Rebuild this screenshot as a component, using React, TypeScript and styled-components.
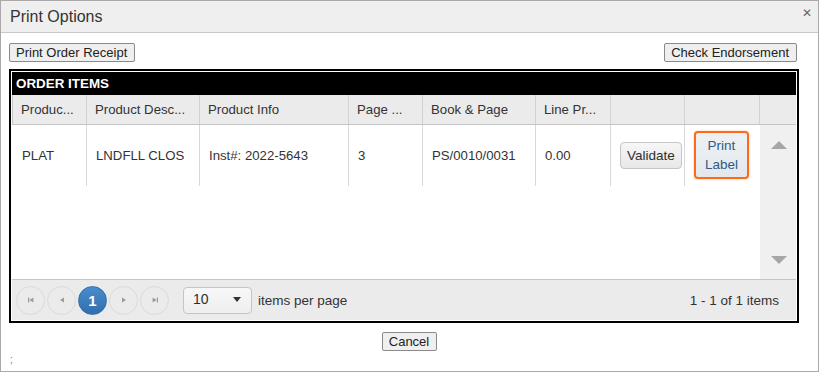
import styled, { createGlobalStyle } from 'styled-components';

const GlobalStyle = createGlobalStyle`
  body {
    margin: 0;
    font-family: 'Liberation Sans', Arial, sans-serif;
    background: #fff;
  }
`;

const columns = [
  { title: 'Produc...', width: 74 },
  { title: 'Product Desc...', width: 113 },
  { title: 'Product Info', width: 149 },
  { title: 'Page ...', width: 74 },
  { title: 'Book & Page', width: 113 },
  { title: 'Line Pr...', width: 75 },
  { title: '', width: 74 },
  { title: '', width: 75 },
];

const gridCols = columns.map((c) => `${c.width}px`).join(' ');

const SDialog = styled.div`
  width: 819px;
  height: 372px;
  box-sizing: border-box;
  border: 1px solid #a9a9a9;
  display: flex;
  flex-direction: column;
`;

const STitleBar = styled.div`
  height: 32px;
  background: #efefef;
  border-bottom: 1px solid #c8c8c8;
  display: flex;
  align-items: center;
  justify-content: space-between;
  padding: 1px 9px 0 9px;
  box-sizing: border-box;
  color: #333;
  font-size: 16px;
`;

const SClose = styled.span`
  font-size: 12px;
  color: #666;
  margin-top: -8px;
  margin-right: -3px;
`;

const SContent = styled.div`
  padding: 10px 0 0 8px;
  width: 790px;
`;

const SActions = styled.div`
  display: flex;
  justify-content: space-between;
  padding-right: 2px;
`;

const SPlainButton = styled.button`
  font-family: 'Liberation Sans', Arial, sans-serif;
  font-size: 13px;
  line-height: 15px;
  color: #222;
  background: #efefef;
  border: 1px solid #8a8a8a;
  border-radius: 2px;
  padding: 1px 7px 1px 6px;
  margin: 0;
`;

const SGrid = styled.div`
  margin-top: 7px;
  border: 2px solid #000;
  padding: 1px;
  width: 790px;
  box-sizing: border-box;
`;

const SToolbar = styled.div`
  height: 23px;
  line-height: 23px;
  background: #000;
  color: #fff;
  font-weight: bold;
  font-size: 13.4px;
  padding-left: 4px;
`;

const SHeaderRow = styled.div`
  display: grid;
  grid-template-columns: ${gridCols} 1fr;
  height: 30px;
  background: #ebebeb;
  border-bottom: 1px solid #c5c5c5;
  box-sizing: border-box;
`;

const SHeaderCell = styled.div<{ $first?: boolean }>`
  border-left: ${(p) => (p.$first ? '1px solid #c5c5c5' : '1px solid #d3d3d3')};
  padding-left: 8px;
  font-size: 13.2px;
  color: #333;
  line-height: 29px;
  white-space: nowrap;
  overflow: hidden;
`;

const SBody = styled.div`
  display: grid;
  grid-template-columns: 1fr 36px;
  height: 154px;
`;

const SRow = styled.div`
  display: grid;
  grid-template-columns: ${gridCols};
  height: 61px;
`;

const SCell = styled.div<{ $first?: boolean }>`
  border-left: 1px solid ${(p) => (p.$first ? 'transparent' : '#d8d8d8')};
  padding-left: 9px;
  display: flex;
  align-items: center;
  font-size: 13.2px;
  color: #333;
  white-space: nowrap;
`;

const SButtonCell = styled.div<{ $offset: number }>`
  border-left: 1px solid #d8d8d8;
  display: flex;
  align-items: flex-start;
  padding-left: ${(p) => p.$offset}px;
`;

const SScrollbar = styled.div`
  background: #f0f0f0;
  display: flex;
  flex-direction: column;
  justify-content: space-between;
  align-items: center;
  padding: 16px 0 15px 1px;
`;

const SArrow = styled.div<{ $down?: boolean }>`
  width: 0;
  height: 0;
  border-left: 8px solid transparent;
  border-right: 8px solid transparent;
  ${(p) => (p.$down ? 'border-top: 8px solid #a6a6a6;' : 'border-bottom: 8px solid #a6a6a6;')}
`;

const SKButton = styled.button`
  font-family: 'Liberation Sans', Arial, sans-serif;
  font-size: 13.5px;
  color: #2e2e2e;
  background: linear-gradient(#f6f6f6, #e8e8e8);
  border: 1px solid #c5c5c5;
  border-radius: 4px;
  width: 62px;
  height: 27px;
  padding: 0;
  margin: 17px 0 0 0;
`;

const SLabelButton = styled.button`
  font-family: 'Liberation Sans', Arial, sans-serif;
  font-size: 13.5px;
  line-height: 19px;
  color: #2d5b8a;
  background: linear-gradient(#eef1f4, #e4e8ec);
  border: 2px solid #ff6a1a;
  border-radius: 4px;
  width: 55px;
  height: 48px;
  padding: 0;
  margin: 6px 0 0 0;
  box-shadow: 0 0 2px rgba(255, 106, 26, 0.5);
`;

const SFooter = styled.div`
  height: 41px;
  border-top: 1px solid #c5c5c5;
  background: #ebebeb;
  box-sizing: border-box;
  display: flex;
  align-items: center;
  padding: 0 17px 0 4px;
  font-size: 13.5px;
  color: #333;
`;

const SPager = styled.div`
  display: flex;
  gap: 2px;
`;

const SPageButton = styled.div<{ $active?: boolean }>`
  width: 29px;
  height: 29px;
  box-sizing: border-box;
  border-radius: 50%;
  border: 1px solid ${(p) => (p.$active ? '#2f6fad' : '#dadada')};
  background: ${(p) => (p.$active ? 'linear-gradient(#4a8ccb, #2f6fad)' : 'transparent')};
  color: #fff;
  font-weight: bold;
  font-size: 15px;
  display: flex;
  align-items: center;
  justify-content: center;
`;

const SSelect = styled.div`
  margin-left: 14px;
  width: 69px;
  height: 27px;
  box-sizing: border-box;
  border: 1px solid #c5c5c5;
  border-radius: 4px;
  background: linear-gradient(#f7f7f7, #eeeeee);
  display: flex;
  align-items: center;
  justify-content: space-between;
  padding: 0 10px 2px 9px;
  font-size: 14px;
  color: #2e2e2e;
`;

const SPerPage = styled.span`
  margin-left: 6px;
`;

const SInfo = styled.span`
  margin-left: auto;
`;

const SFooterActions = styled.div`
  display: flex;
  justify-content: center;
  margin-top: 9px;
`;

const SNote = styled.div`
  padding-left: 9px;
  font-size: 10px;
  color: #777;
  line-height: 12px;
  margin-top: 3px;
`;

const PagerIcon = ({ kind }: { kind: 'first' | 'prev' | 'next' | 'last' }) => {
  const flip = kind === 'next' || kind === 'last';
  const bar = kind === 'first' || kind === 'last';
  return (
    <svg width='8' height='8' viewBox='0 0 8 8' style={{ transform: flip ? 'scaleX(-1)' : undefined }}>
      {bar && <rect x='1' y='1.5' width='1.2' height='5' fill='#9a9a9a' />}
      <polygon points={bar ? '2.4,4 6.4,1.5 6.4,6.5' : '2,4 6,1.5 6,6.5'} fill='#9a9a9a' />
    </svg>
  );
};

const App = () => {
  const row = ['PLAT', 'LNDFLL CLOS', 'Inst#: 2022-5643', '3', 'PS/0010/0031', '0.00'];

  return (
    <>
      <GlobalStyle />
      <SDialog>
        <STitleBar>
          <span>Print Options</span>
          <SClose>✕</SClose>
        </STitleBar>
        <SContent>
          <SActions>
            <SPlainButton>Print Order Receipt</SPlainButton>
            <SPlainButton>Check Endorsement</SPlainButton>
          </SActions>

          <SGrid>
            <SToolbar>ORDER ITEMS</SToolbar>
            <SHeaderRow>
              {columns.map((c, i) => (
                <SHeaderCell key={i} $first={i === 0}>
                  {c.title}
                </SHeaderCell>
              ))}
              <SHeaderCell />
            </SHeaderRow>
            <SBody>
              <div>
                <SRow>
                  {row.map((v, i) => (
                    <SCell key={i} $first={i === 0}>
                      {v}
                    </SCell>
                  ))}
                  <SButtonCell $offset={9}>
                    <SKButton>Validate</SKButton>
                  </SButtonCell>
                  <SButtonCell $offset={9}>
                    <SLabelButton>
                      Print
                      <br />
                      Label
                    </SLabelButton>
                  </SButtonCell>
                </SRow>
              </div>
              <SScrollbar>
                <SArrow />
                <SArrow $down />
              </SScrollbar>
            </SBody>
            <SFooter>
              <SPager>
                <SPageButton>
                  <PagerIcon kind='first' />
                </SPageButton>
                <SPageButton>
                  <PagerIcon kind='prev' />
                </SPageButton>
                <SPageButton $active>1</SPageButton>
                <SPageButton>
                  <PagerIcon kind='next' />
                </SPageButton>
                <SPageButton>
                  <PagerIcon kind='last' />
                </SPageButton>
              </SPager>
              <SSelect>
                <span>10</span>
                <svg width='8' height='5' viewBox='0 0 8 5'>
                  <polygon points='0,0 8,0 4,5' fill='#333' />
                </svg>
              </SSelect>
              <SPerPage>items per page</SPerPage>
              <SInfo>1 - 1 of 1 items</SInfo>
            </SFooter>
          </SGrid>
        </SContent>

        <SFooterActions>
          <SPlainButton>Cancel</SPlainButton>
        </SFooterActions>
        <SNote>;</SNote>
      </SDialog>
    </>
  );
};

export default App;
